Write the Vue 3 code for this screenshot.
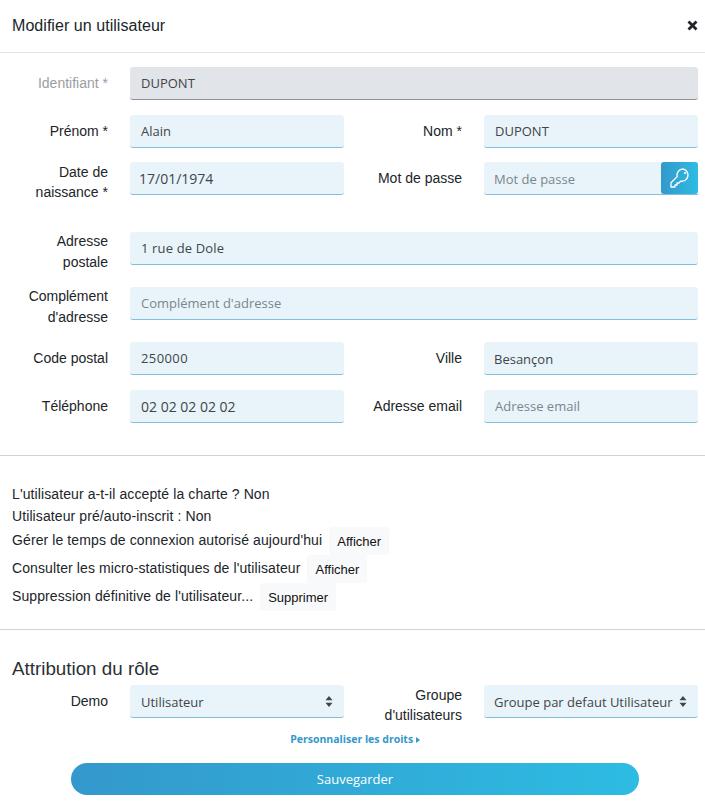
<template>
  <div class="modal">
    <header class="modal-header">
      <h1>Modifier un utilisateur</h1>
      <svg class="close" width="11" height="11" viewBox="0 0 11 11" aria-label="Fermer">
        <path d="M1.5 1.5l8 8M9.5 1.5l-8 8" />
      </svg>
    </header>

    <form class="user-form" @submit.prevent>
      <div class="row">
        <label class="muted">Identifiant *</label>
        <input class="field disabled span-3" value="DUPONT" disabled />
      </div>
      <div class="row">
        <label>Prénom *</label>
        <input class="field" value="Alain" />
        <label>Nom *</label>
        <input class="field" value="DUPONT" />
      </div>
      <div class="row r-date">
        <label class="two">Date de naissance *</label>
        <input class="field digits date" value="17/01/1974" />
        <label>Mot de passe</label>
        <div class="pass">
          <input class="field" placeholder="Mot de passe" />
          <button class="key" type="button" aria-label="Générer">
            <svg width="20" height="20" viewBox="0 0 20 20">
              <path d="M13 1a6 6 0 0 0-5.8 7.6L1 14.8V19h4v-2h2v-2h2l1.6-1.9A6 6 0 1 0 13 1z" />
              <circle cx="15" cy="5" r="1.1" />
            </svg>
          </button>
        </div>
      </div>
      <div class="row r-double">
        <label class="two">Adresse<br />postale</label>
        <input class="field span-3 street" value="1 rue de Dole" />
      </div>
      <div class="row r-double">
        <label class="two">Complément d'adresse</label>
        <input class="field span-3" placeholder="Complément d'adresse" />
      </div>
      <div class="row">
        <label>Code postal</label>
        <input class="field postal" value="250000" />
        <label>Ville</label>
        <input class="field city" value="Besançon" />
      </div>
      <div class="row r-last">
        <label>Téléphone</label>
        <input class="field digits" value="02 02 02 02 02" />
        <label>Adresse email</label>
        <input class="field" placeholder="Adresse email" />
      </div>
    </form>

    <hr class="rule" />

    <section class="infos">
      <p>L'utilisateur a-t-il accepté la charte ? Non</p>
      <p class="short">Utilisateur pré/auto-inscrit : Non</p>
      <p v-for="action in actions" :key="action.text" class="action">
        <span>{{ action.text }}</span>
        <button type="button">{{ action.button }}</button>
      </p>
    </section>

    <hr class="rule rule-2" />

    <section class="roles">
      <h2>Attribution du rôle</h2>
      <div class="row r-role">
        <label>Demo</label>
        <div class="select">
          <span>Utilisateur</span>
          <svg width="8" height="11" viewBox="0 0 8 11"><path d="M4 0l3.5 4.2h-7zM4 11L.5 6.8h7z" /></svg>
        </div>
        <label class="two">Groupe d'utilisateurs</label>
        <div class="select">
          <span>Groupe par defaut Utilisateur</span>
          <svg width="8" height="11" viewBox="0 0 8 11"><path d="M4 0l3.5 4.2h-7zM4 11L.5 6.8h7z" /></svg>
        </div>
      </div>
      <a class="rights">Personnaliser les droits <i></i></a>
      <button class="save" type="button">Sauvegarder</button>
    </section>
  </div>
</template>

<script setup>
const actions = [
  { text: "Gérer le temps de connexion autorisé aujourd'hui", button: 'Afficher' },
  { text: "Consulter les micro-statistiques de l'utilisateur", button: 'Afficher' },
  { text: "Suppression définitive de l'utilisateur...", button: 'Supprimer' },
];
</script>

<style>
html, body {
  margin: 0;
  background: #fff;
}
</style>

<style scoped>
.modal {
  width: 705px;
  height: 807px;
  overflow: hidden;
  font-family: "Liberation Sans", Arial, sans-serif;
  font-size: 14px;
  color: #212529;
  box-sizing: border-box;
}

.modal-header {
  height: 53px;
  box-sizing: border-box;
  border-bottom: 1px solid #e2e5ea;
  display: flex;
  justify-content: space-between;
  align-items: center;
  padding: 0 7px 1px 12px;
}

.modal-header h1 {
  margin: 0;
  font-size: 16px;
  font-weight: 400;
  letter-spacing: 0.05px;
}

.close path {
  fill: none;
  stroke: #212529;
  stroke-width: 2.8;
}

.user-form {
  padding-top: 14px;
}

.row {
  display: grid;
  grid-template-columns: 108px 214px 96px 214px;
  column-gap: 22px;
  align-items: start;
  margin-bottom: 15px;
}

.r-date {
  margin-top: -1px;
  margin-bottom: 30px;
}

.r-double {
  margin-bottom: 22px;
  height: 33px;
}

.r-last {
  margin-bottom: 32px;
}

label {
  text-align: right;
  line-height: 20px;
  padding-top: 6px;
}

label.two {
  padding-top: 0;
}

.r-double label.two {
  margin-top: -1px;
  line-height: 20.5px;
}

.muted {
  color: #9b9ea1;
}

.field {
  display: block;
  width: 100%;
  height: 33px;
  box-sizing: border-box;
  border: 0;
  border-bottom: 1px solid #7fbfdf;
  border-radius: 3px;
  background: #e8f4f9;
  padding: 0 11px;
  font-family: "Open Sans", sans-serif;
  font-size: 13px;
  color: #3f4549;
  outline: none;
}

.field::placeholder {
  color: #7c858c;
  opacity: 1;
}

.digits {
  font-size: 14px;
}

.date {
  padding-left: 9px;
}

.postal {
  letter-spacing: 0.4px;
}

.street {
  letter-spacing: 0.15px;
}

.city {
  padding-top: 1px;
  padding-left: 10px;
}

.disabled {
  background: #e1e4e8;
  border-bottom-color: #8e9194;
}

.span-3 {
  grid-column: 2 / 5;
}

.pass {
  display: flex;
  position: relative;
}

.pass .field {
  border-radius: 3px 0 0 3px;
  padding-top: 1px;
  padding-left: 10px;
}

.key {
  position: absolute;
  right: 0;
  top: 0;
  width: 37px;
  height: 32px;
  border: 0;
  padding: 0;
  border-radius: 3px;
  background: linear-gradient(90deg, #3498cc, #2dbce3);
  display: flex;
  align-items: center;
  justify-content: center;
}

.key path {
  fill: none;
  stroke: #fff;
  stroke-width: 1.3;
  stroke-linejoin: round;
}

.key circle {
  fill: #fff;
}

.rule {
  margin: 0;
  border: 0;
  border-top: 1px solid #d2d2d2;
}

.infos {
  padding: 30px 12px 0;
  letter-spacing: 0.1px;
}

.infos p {
  margin: 0;
  height: 22px;
  line-height: 17px;
}

.infos p.short {
  height: 19px;
}

.infos p.action {
  height: 28px;
  display: flex;
  align-items: center;
  gap: 7px;
  line-height: 20px;
}

.infos p.action span {
  position: relative;
  top: -1px;
}

.infos button {
  height: 28px;
  border: 0;
  border-radius: 3px;
  background: #f8f9fa;
  color: #111;
  font-family: "Liberation Sans", Arial, sans-serif;
  font-size: 13px;
  letter-spacing: 0;
  padding: 0 8px;
}

.rule-2 {
  margin-top: 18px;
}

.roles {
  padding-top: 28px;
}

.roles h2 {
  margin: 0 0 6px 12px;
  font-size: 18.8px;
  font-weight: 400;
  line-height: 21px;
  color: #2b3035;
}

.r-role {
  margin-bottom: 0;
}

.select {
  height: 33px;
  box-sizing: border-box;
  border-bottom: 1px solid #7fbfdf;
  border-radius: 3px;
  background: #e8f4f9;
  padding: 1px 11px 0;
  display: flex;
  align-items: center;
  justify-content: space-between;
  font-family: "Open Sans", sans-serif;
  font-size: 13px;
  color: #3f4549;
  white-space: nowrap;
}

.select + label + .select {
  padding: 1px 11px 0 10px;
}

.select svg {
  fill: #3f4549;
  flex: none;
}

.rights {
  display: block;
  box-sizing: border-box;
  width: 100%;
  padding-left: 5px;
  text-align: center;
  margin-top: 7px;
  font-family: "Open Sans", sans-serif;
  font-size: 10.5px;
  font-weight: 700;
  line-height: 15px;
  color: #3498cc;
}

.rights i {
  display: inline-block;
  border-left: 4px solid #3498cc;
  border-top: 3.5px solid transparent;
  border-bottom: 3.5px solid transparent;
}

.save {
  display: block;
  margin: 16px 0 0 71px;
  width: 568px;
  height: 32px;
  border: 0;
  border-radius: 16px;
  background: linear-gradient(90deg, #3498cc, #2dbce3);
  color: #fff;
  font-family: "Open Sans", sans-serif;
  font-size: 13px;
}
</style>
